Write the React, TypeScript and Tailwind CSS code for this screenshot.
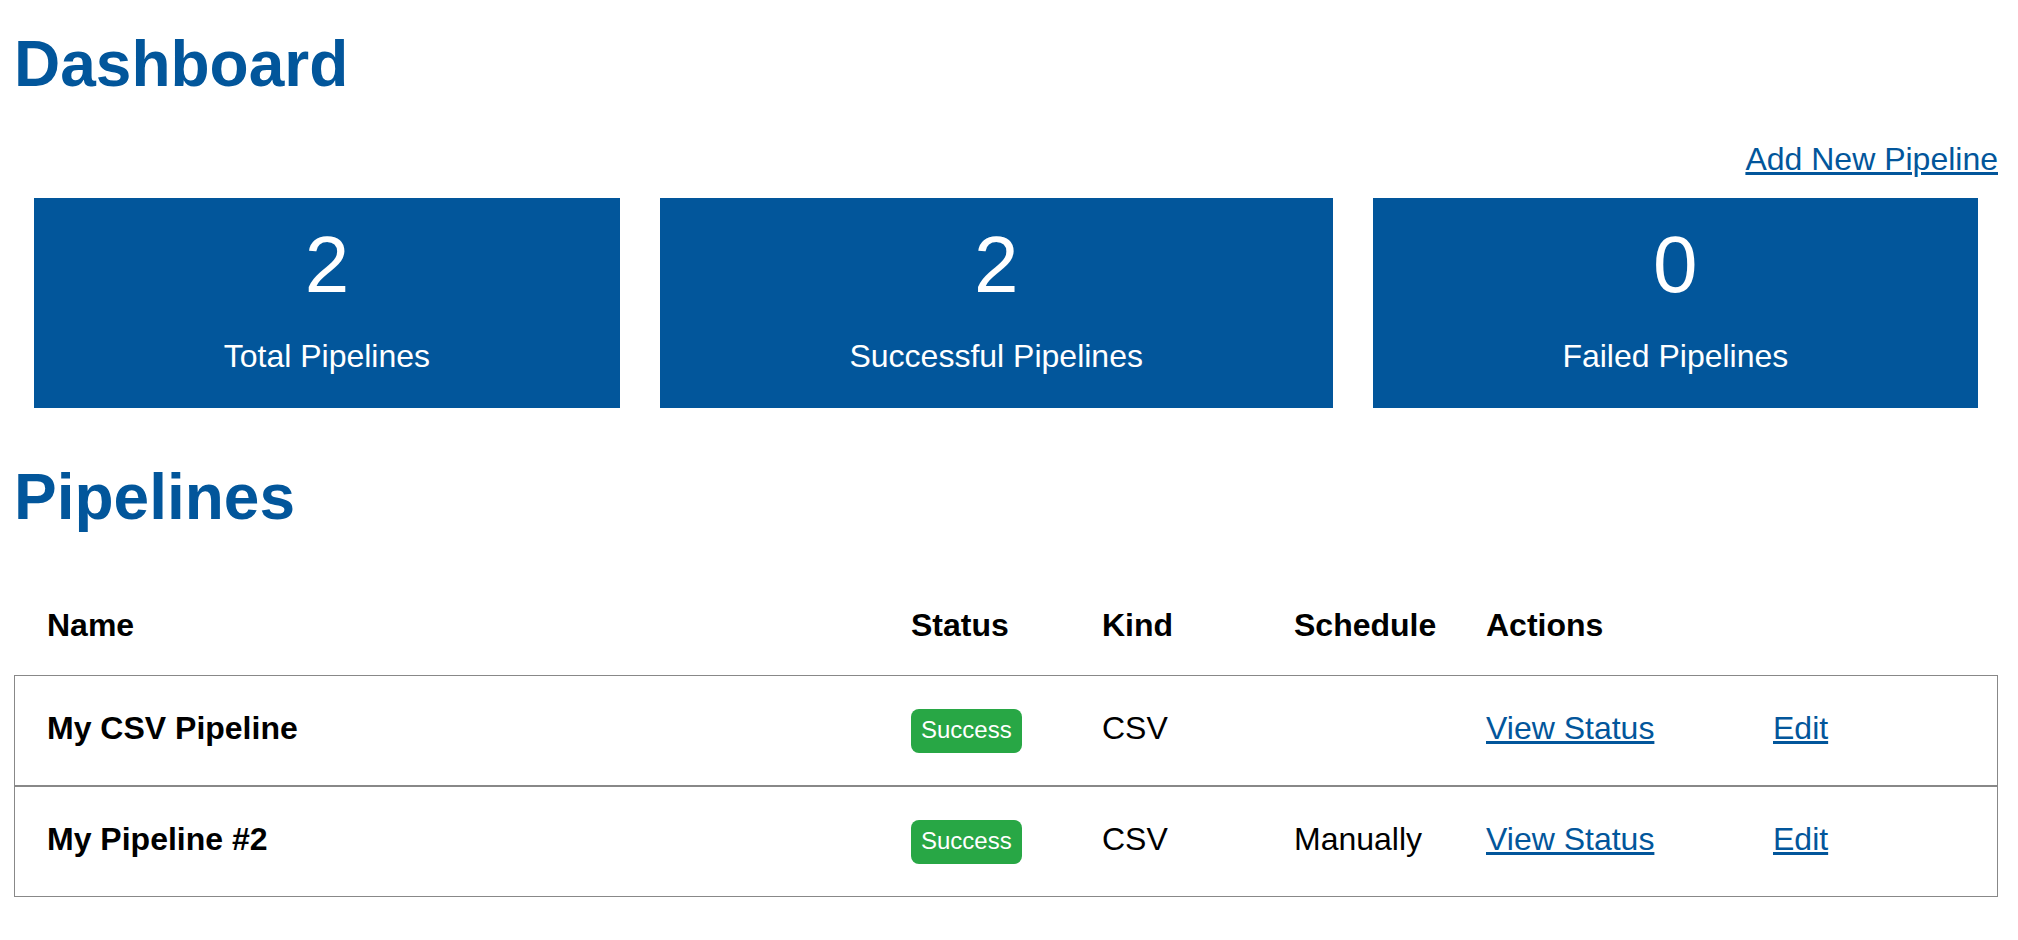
import React from 'react';

const BLUE = 'text-[#02569b]';

const stats = [
  { value: 2, label: 'Total Pipelines' },
  { value: 2, label: 'Successful Pipelines' },
  { value: 0, label: 'Failed Pipelines' },
];

const pipelines = [
  { name: 'My CSV Pipeline', status: 'Success', kind: 'CSV', schedule: '' },
  { name: 'My Pipeline #2', status: 'Success', kind: 'CSV', schedule: 'Manually' },
];

// same column template for header and body rows so everything lines up
const cols = 'grid grid-cols-[864px_191px_192px_192px_287px_1fr]';

function StatCard({ value, label }: { value: number; label: string }) {
  return (
    <div className="flex-auto bg-[#02569b] text-white text-center pt-[21px] pb-[33px]">
      <div className="text-[80px] leading-[92px]">{value}</div>
      <div className="mt-[27px] text-[32px] leading-[37px] whitespace-nowrap">{label}</div>
    </div>
  );
}

export default function App() {
  return (
    <div
      className="min-h-screen bg-white text-black pl-[14px] pr-[20px] pt-[28px]"
      style={{ fontFamily: '"Liberation Sans", Arial, Helvetica, sans-serif' }}
    >
      <h1 className={`text-[64px] leading-[73px] font-bold ${BLUE}`}>Dashboard</h1>

      <div className="mt-[40px] text-right text-[32px] leading-[37px]">
        <a href="#" className={`${BLUE} underline`}>
          Add New Pipeline
        </a>
      </div>

      {/* Summary cards */}
      <div className="mt-[20px] flex gap-[40px] px-[20px]">
        {stats.map((s) => (
          <StatCard key={s.label} value={s.value} label={s.label} />
        ))}
      </div>

      <h1 className={`mt-[53px] text-[64px] leading-[73px] font-bold ${BLUE}`}>Pipelines</h1>

      {/* Table */}
      <div className="mt-[41px] text-[32px] leading-[37px]">
        <div className={`${cols} px-[1px] pt-[32px] pb-[31px] font-bold`}>
          <div className="pl-[32px]">Name</div>
          <div className="pl-[32px]">Status</div>
          <div className="pl-[32px]">Kind</div>
          <div className="pl-[32px]">Schedule</div>
          <div className="pl-[32px]">Actions</div>
          <div />
        </div>

        {pipelines.map((p) => (
          <div key={p.name} className={`${cols} items-center h-[111px] border border-[#888]`}>
            <div className="pl-[32px] mb-[5px] font-bold">{p.name}</div>
            <div className="pl-[32px]">
              <span className="inline-block rounded-[8px] bg-[#28a745] text-white text-[24px] leading-[28px] px-[10px] pt-[7px] pb-[9px]">
                {p.status}
              </span>
            </div>
            <div className="pl-[32px] mb-[5px]">{p.kind}</div>
            <div className="pl-[32px] mb-[5px]">{p.schedule}</div>
            <div className="pl-[32px] mb-[5px]">
              <a href="#" className={`${BLUE} underline`}>
                View Status
              </a>
            </div>
            <div className="pl-[32px] mb-[5px]">
              <a href="#" className={`${BLUE} underline`}>
                Edit
              </a>
            </div>
          </div>
        ))}
      </div>
    </div>
  );
}
